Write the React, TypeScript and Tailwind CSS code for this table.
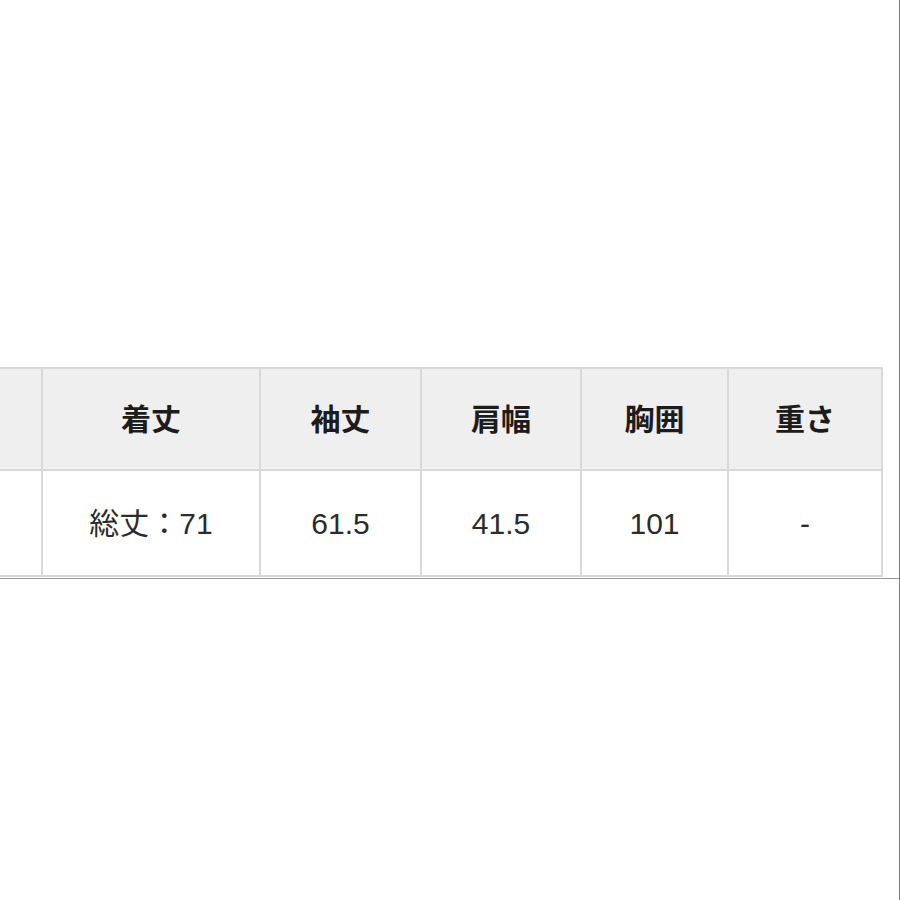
const headers = ["", "着丈", "袖丈", "肩幅", "胸囲", "重さ"];
const values = ["", "総丈：71", "61.5", "41.5", "101", "-"];

export default function App() {
  return (
    <div
      className="flex h-[900px] w-[900px] bg-white"
      style={{ fontFamily: '"Liberation Sans", "Noto Sans CJK JP", sans-serif' }}
    >
      <div className="flex w-[899px] flex-col pt-[367px]">
        <div className="grid w-[883px] grid-cols-[41px_216px_159px_158px_145px_152px] grid-rows-[100px_104px] gap-[2px] bg-[#d9d9d9] py-[2px] pr-[2px]">
          {headers.map((h, i) => (
            <div
              key={"h" + i}
              className="flex items-center justify-center bg-[#efefef] text-[30px] font-bold text-[#1c1c1c]"
            >
              {h}
            </div>
          ))}
          {values.map((v, i) => (
            <div
              key={"v" + i}
              className="flex items-center justify-center bg-white text-[30px] text-[#2b2b2b]"
            >
              {v}
            </div>
          ))}
        </div>
        <div className="mt-px h-px w-full bg-[#9a9a9a]" />
      </div>
      <div className="h-full w-px bg-[#808080]" />
    </div>
  );
}
